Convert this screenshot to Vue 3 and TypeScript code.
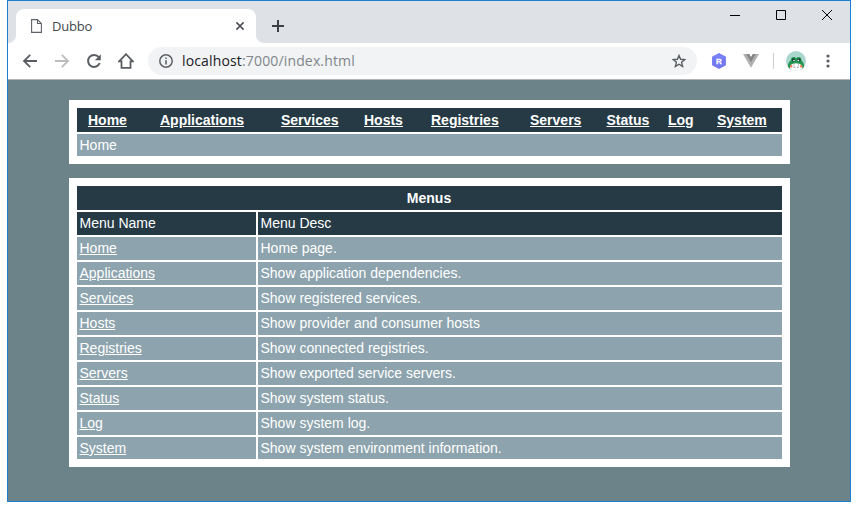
<script setup lang="ts">
interface MenuItem {
  name: string
  desc: string
}

const menus: MenuItem[] = [
  { name: 'Home', desc: 'Home page.' },
  { name: 'Applications', desc: 'Show application dependencies.' },
  { name: 'Services', desc: 'Show registered services.' },
  { name: 'Hosts', desc: 'Show provider and consumer hosts' },
  { name: 'Registries', desc: 'Show connected registries.' },
  { name: 'Servers', desc: 'Show exported service servers.' },
  { name: 'Status', desc: 'Show system status.' },
  { name: 'Log', desc: 'Show system log.' },
  { name: 'System', desc: 'Show system environment information.' },
]
</script>

<template>
  <div class="window">
    <header class="tabstrip">
      <div class="tab">
        <svg class="file" width="12" height="14" viewBox="0 0 12 14" fill="none" stroke="#5f6368" stroke-width="1.1">
          <path d="M.6 .6H6.5L10.4 4.5V13.4H.6ZM6.5.8V4.5H10.2" />
        </svg>
        <span class="tab-title">Dubbo</span>
        <svg class="close" width="10" height="10" viewBox="0 0 10 10" stroke="#4b4f53" stroke-width="1.5">
          <path d="M1.4 1.4 8.6 8.6M8.6 1.4 1.4 8.6" />
        </svg>
      </div>
      <svg class="plus" width="12" height="12" viewBox="0 0 12 12" stroke="#3c4043" stroke-width="2">
        <path d="M6 0V12M0 6H12" />
      </svg>
      <div class="controls">
        <svg width="10" height="10" viewBox="0 0 10 10"><path d="M0 5.5H10" stroke="#000" /></svg>
        <svg width="10" height="10" viewBox="0 0 10 10"><path d="M.5.5H9.5V9.5H.5Z" fill="none" stroke="#000" /></svg>
        <svg width="10" height="10" viewBox="0 0 10 10"><path d="M0 0 10 10M10 0 0 10" stroke="#000" /></svg>
      </div>
    </header>

    <div class="toolbar">
      <svg class="nav" width="16" height="16" viewBox="0 0 16 16" fill="none" stroke="#5a5e62" stroke-width="1.8">
        <path d="M15 8H2.4M8.2 1.8 2 8 8.2 14.2" />
      </svg>
      <svg class="nav" width="16" height="16" viewBox="0 0 16 16" fill="none" stroke="#babcbe" stroke-width="1.8">
        <path d="M1 8H13.6M7.8 1.8 14 8 7.8 14.2" />
      </svg>
      <svg class="nav" width="16" height="16" viewBox="0 0 16 16">
        <path d="M12.8 4.2A6 6 0 1 0 13.7 10" fill="none" stroke="#5a5e62" stroke-width="2" />
        <path d="M14.8 1.2V7.2H8.8Z" fill="#5a5e62" />
      </svg>
      <svg class="nav" width="16" height="16" viewBox="0 0 16 16" fill="none" stroke="#5a5e62" stroke-width="1.8">
        <path d="M1.2 8.4H3.5V14.9H12.5V8.4H14.8L8 1.2Z" />
      </svg>
      <div class="omnibox">
        <svg width="14" height="14" viewBox="0 0 14 14">
          <circle cx="7" cy="7" r="6.2" fill="none" stroke="#5f6368" stroke-width="1.5" />
          <path d="M7 6.2V10.6M7 3.4V5" stroke="#5f6368" stroke-width="1.6" />
        </svg>
        <span class="url"><b>localhost</b>:7000/index.html</span>
        <svg class="star" width="14" height="14" viewBox="0 0 14 14" fill="none" stroke="#5a5e62" stroke-width="1.4">
          <path d="M7 1.5 8.6 5.3 12.8 5.6 9.6 8.3 10.6 12.4 7 10.2 3.4 12.4 4.4 8.3 1.2 5.6 5.4 5.3Z" />
        </svg>
      </div>
      <svg class="hex" width="16" height="18" viewBox="0 0 16 18">
        <path d="M8 1.8 14.2 5V13L8 16.2 1.8 13V5Z" fill="#7279f0" stroke="#7279f0" stroke-width="1.4" stroke-linejoin="round" />
        <path d="M8 1.4 14.6 5 8 9 1.4 5Z" fill="#7a81f6" />
        <text x="8" y="11.9" text-anchor="middle" fill="#fff" stroke="#fff" stroke-width=".3" font-family="Liberation Sans, sans-serif" font-weight="700" font-size="8">R</text>
      </svg>
      <svg class="vue" width="16" height="14" viewBox="0 0 16 14">
        <path d="M0 0H3.5L8 8 12.5 0H16L8 13.8Z" fill="#b0b0b0" />
        <path d="M3.2 0H6.3L8 3 9.7 0H12.8L8 8.4Z" fill="#858585" />
      </svg>
      <span class="divider"></span>
      <svg class="avatar" width="20" height="20" viewBox="0 0 20 20">
        <defs><clipPath id="face"><circle cx="10" cy="10" r="10" /></clipPath></defs>
        <g clip-path="url(#face)">
          <path d="M0 0H20V20H0Z" fill="#a9d6cd" />
          <path d="M2 17C1.5 13 3 10.5 4.8 9.5 4.6 5.6 9 5 10.2 7.5 11.5 5 15.7 5.6 15.4 9.5 17.5 11 18.5 14 18 17L15 19H5Z" fill="#249653" />
          <path d="M4 17Q4 13.5 7 12.8L10 12.2 13 12.8Q16 13.5 16.3 17L14.5 20H5.5Z" fill="#fff" />
          <circle cx="7.5" cy="9" r="1.7" fill="#183d35" />
          <circle cx="13" cy="9" r="1.7" fill="#183d35" />
          <circle cx="8" cy="9.5" r=".8" fill="#fff" />
          <circle cx="12.4" cy="9.5" r=".8" fill="#fff" />
          <path d="M7.4 14H8.4M12 14H13M7.6 16.2H9.4M11 16.2H12.8" stroke="#5f7885" stroke-width=".8" />
          <circle cx="5.2" cy="15.3" r="1.2" fill="#fb7855" />
          <circle cx="15.2" cy="15.3" r="1.2" fill="#fb7855" />
        </g>
      </svg>
      <svg class="dots" width="4" height="14" viewBox="0 0 4 14" fill="#5a5e62">
        <circle cx="2" cy="2" r="1.6" /><circle cx="2" cy="7" r="1.6" /><circle cx="2" cy="12" r="1.6" />
      </svg>
    </div>

    <main class="page">
      <section class="panel">
        <nav class="navbar">
          <span v-for="item in menus" :key="item.name"><a>{{ item.name }}</a></span>
        </nav>
        <div class="cell crumb">Home</div>
      </section>

      <section class="panel menu-table">
        <div class="caption">Menus</div>
        <div class="row head">
          <div class="cell">Menu Name</div>
          <div class="cell">Menu Desc</div>
        </div>
        <div v-for="item in menus" :key="item.name" class="row">
          <div class="cell"><a>{{ item.name }}</a></div>
          <div class="cell">{{ item.desc }}</div>
        </div>
      </section>
    </main>
  </div>
</template>

<style>
body {
  background: #fff;
}
</style>

<style scoped>
.window {
  box-sizing: border-box;
  width: 844px;
  height: 502px;
  margin-left: 7px;
  border: 1px solid #1c7fd0;
  display: flex;
  flex-direction: column;
  font-family: "Liberation Sans", Arial, sans-serif;
}
svg {
  display: block;
  flex: none;
}
.tabstrip {
  height: 42px;
  flex: none;
  background: #dee1e6;
  display: flex;
  align-items: flex-start;
}
.tab {
  position: relative;
  box-sizing: border-box;
  width: 240px;
  height: 34px;
  margin: 8px 0 0 8px;
  padding: 0 11px 0 15px;
  border-radius: 8px 8px 0 0;
  background: #fff;
  display: flex;
  align-items: center;
}
.tab::before,
.tab::after {
  content: "";
  position: absolute;
  bottom: 0;
  width: 8px;
  height: 8px;
}
.tab::before {
  left: -8px;
  background: radial-gradient(circle at 0 0, #dee1e6 7.5px, #fff 8.5px);
}
.tab::after {
  right: -8px;
  background: radial-gradient(circle at 100% 0, #dee1e6 7.5px, #fff 8.5px);
}
.tab-title {
  margin-left: 9px;
  font: 13px/18px "Open Sans", sans-serif;
  letter-spacing: -0.2px;
  color: #45494d;
}
.close {
  margin-left: auto;
}
.plus {
  margin: 19px 0 0 16px;
}
.controls {
  margin: 9px 18px 0 auto;
  display: flex;
  gap: 36px;
}
.toolbar {
  box-sizing: border-box;
  height: 37px;
  flex: none;
  padding-left: 14px;
  border-bottom: 1px solid #b2b4b6;
  background: #fff;
  display: flex;
  align-items: center;
}
.nav {
  margin-right: 16px;
}
.omnibox {
  box-sizing: border-box;
  width: 549px;
  height: 28px;
  margin-left: -2px;
  padding: 0 11px;
  border-radius: 14px;
  background: #f1f3f4;
  display: flex;
  align-items: center;
}
.url {
  margin-left: 9px;
  font: 14px/20px "Open Sans", sans-serif;
  letter-spacing: 0.15px;
  color: #80868b;
}
.url b {
  font-weight: 400;
  color: #202124;
}
.star {
  margin-left: auto;
}
.hex {
  margin-left: 14px;
}
.vue {
  margin-left: 16px;
}
.divider {
  width: 1px;
  height: 16px;
  margin: 0 12px 0 14px;
  background: #cbcdd0;
}
.dots {
  margin-left: 20.4px;
}
.page {
  flex: 1;
  padding: 20px 60px 0 61px;
  background: #6d838a;
  display: flex;
  flex-direction: column;
  gap: 14px;
  color: #fff;
  font-size: 14px;
}
.panel {
  padding: 8px;
  background: #fff;
  display: flex;
  flex-direction: column;
  gap: 2px;
}
.navbar {
  height: 24px;
  padding-left: 11px;
  background: #253a45;
  display: grid;
  grid-template-columns: 72px 121px 83px 67px 99px 76.5px 61.5px 49px 1fr;
  line-height: 24px;
  font-weight: 700;
}
a {
  text-decoration: underline;
}
.cell {
  height: 23px;
  padding-left: 2.5px;
  background: #8da4ae;
  line-height: 23px;
}
.crumb,
.row:last-child .cell {
  height: 22px;
}
.caption {
  height: 24px;
  padding-right: 1px;
  background: #253a45;
  line-height: 24px;
  font-weight: 700;
  text-align: center;
}
.row {
  display: grid;
  grid-template-columns: 179px 1fr;
  gap: 2px;
}
.head .cell {
  background: #253a45;
}
</style>
